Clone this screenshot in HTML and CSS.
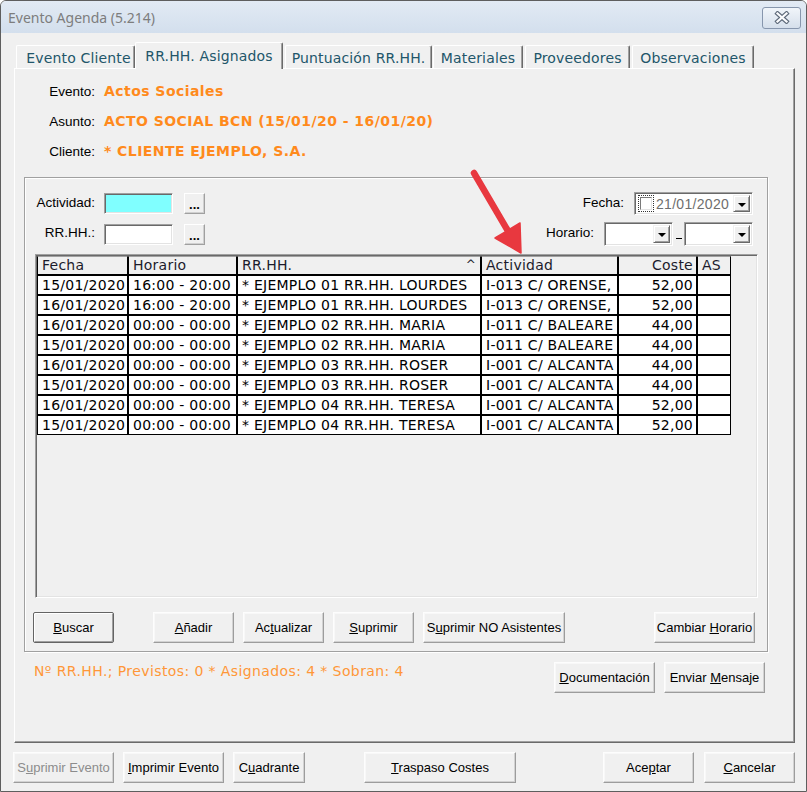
FILE: index.html
```html
<!DOCTYPE html>
<html lang="es">
  <head>
    <meta charset="UTF-8" />
    <title>Evento Agenda (5.214)</title>
    <link rel="stylesheet" href="styles.css">
  </head>
  <body>
    <div class="window">
      <!-- Barra de título -->
      <div class="titlebar">
        <span class="title">Evento Agenda (5.214)</span>
        <div class="close-btn">
          <svg width="18" height="13" viewBox="0 0 18 13">
            <path d="M4.5 2.5 L13.5 10.5 M13.5 2.5 L4.5 10.5" stroke="#5f6b7b" stroke-width="4.4" stroke-linecap="square" />
            <path d="M4.5 2.5 L13.5 10.5 M13.5 2.5 L4.5 10.5" stroke="#fbfcfe" stroke-width="2.2" stroke-linecap="square" />
          </svg>
        </div>
      </div>

      <div class="client">
        <!-- Pestañas -->
        <div class="tabs">
          <div class="tab t1">Evento Cliente</div>
          <div class="tab t2 active">RR.HH. Asignados</div>
          <div class="tab t3">Puntuación RR.HH.</div>
          <div class="tab t4">Materiales</div>
          <div class="tab t5">Proveedores</div>
          <div class="tab t6">Observaciones</div>
        </div>

        <div class="panel">
          <!-- Datos del evento -->
          <div class="info">
            <div class="info-row"><span class="info-label">Evento:</span><span class="info-value">Actos Sociales</span></div>
            <div class="info-row"><span class="info-label">Asunto:</span><span class="info-value">ACTO SOCIAL BCN (15/01/20 - 16/01/20)</span></div>
            <div class="info-row"><span class="info-label">Cliente:</span><span class="info-value">* CLIENTE EJEMPLO, S.A.</span></div>
          </div>

          <div class="group">
            <!-- Filtros -->
            <div class="filters">
              <div class="filter-col">
                <div class="filter-row">
                  <span class="flabel">Actividad:</span>
                  <span class="field cyan"></span>
                  <button class="dots">...</button>
                </div>
                <div class="filter-row">
                  <span class="flabel">RR.HH.:</span>
                  <span class="field"></span>
                  <button class="dots">...</button>
                </div>
              </div>
              <div class="filter-col right">
                <div class="filter-row">
                  <span class="rlabel">Fecha:</span>
                  <div class="datebox">
                    <span class="check"></span>
                    <span class="date-text">21/01/2020</span>
                    <span class="drop"><span class="tri"></span></span>
                  </div>
                </div>
                <div class="filter-row">
                  <span class="rlabel">Horario:</span>
                  <div class="combo"><span class="drop"><span class="tri"></span></span></div>
                  <span class="dash"></span>
                  <div class="combo"><span class="drop"><span class="tri"></span></span></div>
                </div>
              </div>
            </div>

            <!-- Rejilla de RR.HH. -->
            <div class="grid">
              <div class="rows">
                <div class="cell head">Fecha</div>
                <div class="cell head">Horario</div>
                <div class="cell head sorted"><span>RR.HH.</span><span class="caret">^</span></div>
                <div class="cell head">Actividad</div>
                <div class="cell head num">Coste</div>
                <div class="cell head">AS</div>

                <div class="cell">15/01/2020</div><div class="cell">16:00 - 20:00</div><div class="cell">* EJEMPLO 01 RR.HH. LOURDES</div><div class="cell">I-013 C/ ORENSE,</div><div class="cell num">52,00</div><div class="cell"></div>
                <div class="cell">16/01/2020</div><div class="cell">16:00 - 20:00</div><div class="cell">* EJEMPLO 01 RR.HH. LOURDES</div><div class="cell">I-013 C/ ORENSE,</div><div class="cell num">52,00</div><div class="cell"></div>
                <div class="cell">16/01/2020</div><div class="cell">00:00 - 00:00</div><div class="cell">* EJEMPLO 02 RR.HH. MARIA</div><div class="cell">I-011 C/ BALEARE</div><div class="cell num">44,00</div><div class="cell"></div>
                <div class="cell">15/01/2020</div><div class="cell">00:00 - 00:00</div><div class="cell">* EJEMPLO 02 RR.HH. MARIA</div><div class="cell">I-011 C/ BALEARE</div><div class="cell num">44,00</div><div class="cell"></div>
                <div class="cell">16/01/2020</div><div class="cell">00:00 - 00:00</div><div class="cell">* EJEMPLO 03 RR.HH. ROSER</div><div class="cell">I-001 C/ ALCANTA</div><div class="cell num">44,00</div><div class="cell"></div>
                <div class="cell">15/01/2020</div><div class="cell">00:00 - 00:00</div><div class="cell">* EJEMPLO 03 RR.HH. ROSER</div><div class="cell">I-001 C/ ALCANTA</div><div class="cell num">44,00</div><div class="cell"></div>
                <div class="cell">16/01/2020</div><div class="cell">00:00 - 00:00</div><div class="cell">* EJEMPLO 04 RR.HH. TERESA</div><div class="cell">I-001 C/ ALCANTA</div><div class="cell num">52,00</div><div class="cell"></div>
                <div class="cell">15/01/2020</div><div class="cell">00:00 - 00:00</div><div class="cell">* EJEMPLO 04 RR.HH. TERESA</div><div class="cell">I-001 C/ ALCANTA</div><div class="cell num">52,00</div><div class="cell"></div>
              </div>
            </div>

            <!-- Botones de la rejilla -->
            <div class="actions">
              <button class="btn default w81"><u>B</u>uscar</button>
              <button class="btn w81 first"><u>A</u>ñadir</button>
              <button class="btn w81">Ac<u>t</u>ualizar</button>
              <button class="btn w81"><u>S</u>uprimir</button>
              <button class="btn w141">S<u>u</u>primir NO Asistentes</button>
              <button class="btn w101 push">Cambiar <u>H</u>orario</button>
            </div>
          </div>

          <!-- Resumen -->
          <div class="status">
            <span class="status-text">Nº RR.HH.; Previstos: 0 * Asignados: 4 * Sobran: 4</span>
            <button class="btn w101 push"><u>D</u>ocumentación</button>
            <button class="btn w101">Enviar <u>M</u>ensaje</button>
          </div>
        </div>

        <!-- Botones inferiores -->
        <div class="footer">
          <button class="btn w101 disabled shift">S<u>u</u>primir Evento</button>
          <button class="btn w101"><u>I</u>mprimir Evento</button>
          <button class="btn w72">C<u>u</u>adrante</button>
          <button class="btn w152 wide-gap"><u>T</u>raspaso Costes</button>
          <button class="btn w91 push">Ace<u>p</u>tar</button>
          <button class="btn w91"><u>C</u>ancelar</button>
        </div>
      </div>

      <!-- Flecha roja -->
      <svg class="arrow" width="80" height="100" viewBox="0 0 80 100">
        <line x1="14" y1="13" x2="48" y2="71" stroke="#e8383f" stroke-width="6.5" stroke-linecap="round" />
        <polygon points="61,93 35,78 60,63" fill="#e8383f" stroke="#e8383f" stroke-width="1.5" stroke-linejoin="round" />
      </svg>
    </div>
  </body>
</html>
```

FILE: styles.css
```css
/* Ventana */
* {
  box-sizing: border-box;
}

body {
  margin: 0;
  background: #ffffff;
  font-family: "Liberation Sans", Arial, sans-serif;
  font-size: 13px;
}

.window {
  position: relative;
  width: 807px;
  height: 792px;
  border: 1px solid #5e5e5e;
  border-radius: 6px 6px 0 0;
  background: #f0f0f0;
  display: flex;
  flex-direction: column;
  overflow: hidden;
}

/* Barra de título */
.titlebar {
  height: 32px;
  flex: none;
  display: flex;
  align-items: center;
  justify-content: space-between;
  padding: 0 5px 0 7px;
  background: linear-gradient(#e2eaf4, #d3dfed);
}

.title {
  font-family: "Noto Sans", sans-serif;
  font-size: 14px;
  color: #7d7d7d;
}

.close-btn {
  width: 39px;
  height: 22px;
  border: 1px solid #8796ad;
  border-radius: 3px;
  background: linear-gradient(#f1f5fa, #d5dfeb);
  display: flex;
  align-items: center;
  justify-content: center;
  margin-top: 1px;
}

.client {
  flex: 1;
  display: flex;
  flex-direction: column;
  padding: 9px 11px 8px 13px;
}

/* Pestañas */
.tabs {
  height: 26px;
  flex: none;
  display: flex;
  align-items: flex-end;
  padding-left: 2px;
}

.tab {
  height: 23px;
  padding-top: 2px;
  display: flex;
  align-items: center;
  justify-content: center;
  font-family: "DejaVu Sans", Verdana, sans-serif;
  font-size: 14px;
  letter-spacing: 0.15px;
  color: #22566a;
  white-space: nowrap;
  border-top: 1px solid #ffffff;
  border-left: 1px solid #ffffff;
  border-right: 1px solid #6a6a6a;
  box-shadow: inset -1px 0 #a0a0a0;
  border-radius: 2px 2px 0 0;
}

.t1 { width: 119px; padding-left: 6px; }
.t2 { width: 148px; margin-right: 2px; }
.t3 { width: 147px; margin-right: 1px; }
.t4 { width: 90px; margin-right: 2px; }
.t5 { width: 105px; margin-right: 2px; }
.t6 { width: 122px; }

.tab.active {
  height: 27px;
  padding-top: 0;
  margin-bottom: -1px;
  position: relative;
  z-index: 1;
  background: #f0f0f0;
}

.panel {
  flex: 1;
  display: flex;
  flex-direction: column;
  border-top: 1px solid #ffffff;
  border-left: 1px solid #ffffff;
  border-right: 1px solid #6a6a6a;
  border-bottom: 1px solid #6a6a6a;
  box-shadow: inset -1px -1px #a0a0a0;
}

/* Datos del evento */
.info {
  padding-top: 7px;
}

.info-row {
  height: 30px;
  display: flex;
  align-items: center;
}

.info-label {
  width: 80px;
  text-align: right;
  font-size: 13.5px;
  color: #000000;
}

.info-value {
  margin-left: 9px;
  font-family: "DejaVu Sans", Verdana, sans-serif;
  font-weight: bold;
  font-size: 14px;
  letter-spacing: 0.45px;
  color: #ff8a1c;
}

/* Marco de grupo */
.group {
  margin: 11px 26px 0 9px;
  padding: 14px 9px 8px 10px;
  border: 1px solid #a0a0a0;
  box-shadow: inset 1px 1px #ffffff, 1px 1px #ffffff;
}

.filters {
  display: flex;
  justify-content: space-between;
  padding-right: 5px;
}

.filter-col {
  display: flex;
  flex-direction: column;
  gap: 7px;
}

.filter-col.right {
  align-items: flex-end;
}

.filter-row {
  height: 23px;
  display: flex;
  align-items: center;
  font-size: 13.5px;
}

.filter-row:last-child {
  height: 24px;
}

.flabel {
  width: 60px;
  text-align: right;
  margin-right: 9px;
  margin-top: -3px;
}

.rlabel {
  margin-right: 10px;
  margin-top: -3px;
}

.field {
  width: 69px;
  height: 21px;
  background: #ffffff;
  border: 1px solid;
  border-color: #a0a0a0 #ffffff #ffffff #a0a0a0;
  box-shadow: inset 1px 1px #696969, inset -1px -1px #e3e3e3;
}

.field.cyan {
  background: #80ffff;
}

.dots {
  width: 21px;
  height: 21px;
  margin-left: 11px;
  padding: 0 0 3px 0;
  font: bold 13px "Liberation Sans", Arial, sans-serif;
  line-height: 10px;
  color: #000000;
  background: #f0f0f0;
  border: 1px solid;
  border-color: #ffffff #a0a0a0 #a0a0a0 #ffffff;
  box-shadow: inset -1px -1px #d0d0d0;
  display: flex;
  align-items: flex-end;
  justify-content: center;
}

.datebox,
.combo {
  height: 23px;
  display: flex;
  align-items: center;
  padding: 2px;
  background: #ffffff;
  border: 1px solid;
  border-color: #a0a0a0 #ffffff #ffffff #a0a0a0;
  box-shadow: inset 1px 1px #696969, inset -1px -1px #e3e3e3;
}

.datebox {
  width: 119px;
}

.combo {
  width: 69px;
  height: 24px;
}

.check {
  width: 12px;
  height: 13px;
  margin-left: 3px;
  border: 1px solid;
  border-color: #7a7a7a #e3e3e3 #e3e3e3 #7a7a7a;
  background: #ffffff;
  outline: 1px dotted #333333;
  outline-offset: 1px;
}

.date-text {
  margin-left: 4px;
  font-size: 14px;
  color: #6e6e6e;
  letter-spacing: 0.3px;
}

.drop {
  margin-left: auto;
  width: 17px;
  height: 17px;
  background: #f0f0f0;
  border: 1px solid;
  border-color: #f0f0f0 #696969 #696969 #f0f0f0;
  box-shadow: inset 1px 1px #ffffff, inset -1px -1px #a0a0a0;
  display: flex;
  align-items: center;
  justify-content: center;
}

.combo .drop {
  height: 18px;
}

.tri {
  width: 0;
  height: 0;
  margin-top: 2px;
  border-left: 4px solid transparent;
  border-right: 4px solid transparent;
  border-top: 4px solid #000000;
}

.dash {
  width: 11px;
  height: 24px;
  position: relative;
}

.dash::after {
  content: "";
  position: absolute;
  left: 3px;
  right: 2px;
  bottom: 7px;
  border-top: 1px solid #000000;
}

/* Rejilla */
.grid {
  margin-top: 8px;
  height: 344px;
  padding: 1px;
  border: 1px solid;
  border-color: #a0a0a0 #ffffff #ffffff #a0a0a0;
  box-shadow: inset 1px 1px #696969, inset -1px -1px #e3e3e3;
}

.rows {
  display: grid;
  grid-template-columns: 91px 109px 244px 137px 79px 34px;
  grid-template-rows: 19px repeat(8, 20px);
  width: 694px;
}

.cell {
  border: 1px solid #000000;
  background: #ffffff;
  padding: 0 3px 0 4px;
  font-family: "DejaVu Sans", Verdana, sans-serif;
  font-size: 14px;
  letter-spacing: 0.25px;
  line-height: 18px;
  color: #000000;
  white-space: nowrap;
  overflow: hidden;
}

.cell.head {
  background: #f0f0f0;
  border-top-color: #a0a0a0;
  line-height: 17px;
  color: #1c1c2c;
}

.cell.sorted {
  display: flex;
  justify-content: space-between;
}

.caret {
  font-size: 12px;
  padding-right: 1px;
}

.num {
  text-align: right;
}

/* Botones */
.btn {
  height: 31px;
  padding: 0;
  font-family: "Liberation Sans", Arial, sans-serif;
  font-size: 13px;
  color: #000000;
  background: #f0f0f0;
  border: 1px solid;
  border-color: #fdfdfd #9c9c9c #9c9c9c #fdfdfd;
  box-shadow: inset -1px -1px #d2d2d2, inset 1px 1px #f8f8f8;
  white-space: nowrap;
}

.btn.default {
  border: 1px solid #646464;
  border-radius: 2px;
  box-shadow: inset 1px 1px #ffffff, inset -1px -1px #a0a0a0;
}

.btn.disabled {
  color: #8c8c8c;
}

.w72 { width: 72px; }
.w81 { width: 81px; }
.w91 { width: 91px; }
.w101 { width: 101px; }
.w141 { width: 142px; }
.w152 { width: 152px; }

.actions {
  margin-top: 14px;
  display: flex;
  gap: 9px;
}

.actions .default {
  margin-left: -2px;
}

.actions .first {
  margin-left: 30px;
}

.push {
  margin-left: auto;
}

.actions .push {
  margin-right: 3px;
}

.status {
  display: flex;
  gap: 9px;
  padding: 10px 29px 0 19px;
}

.status-text {
  font-family: "DejaVu Sans", Verdana, sans-serif;
  font-size: 14px;
  letter-spacing: 0.4px;
  line-height: 18px;
  color: #ff9738;
}

.footer {
  margin-top: 9px;
  display: flex;
  gap: 9px;
}

.footer .shift {
  margin-left: -1px;
}

.footer .wide-gap {
  margin-left: 50px;
}

.footer .push + .btn {
  margin-left: 1px;
}

/* Flecha superpuesta */
.arrow {
  position: absolute;
  left: 459px;
  top: 159px;
}
```
